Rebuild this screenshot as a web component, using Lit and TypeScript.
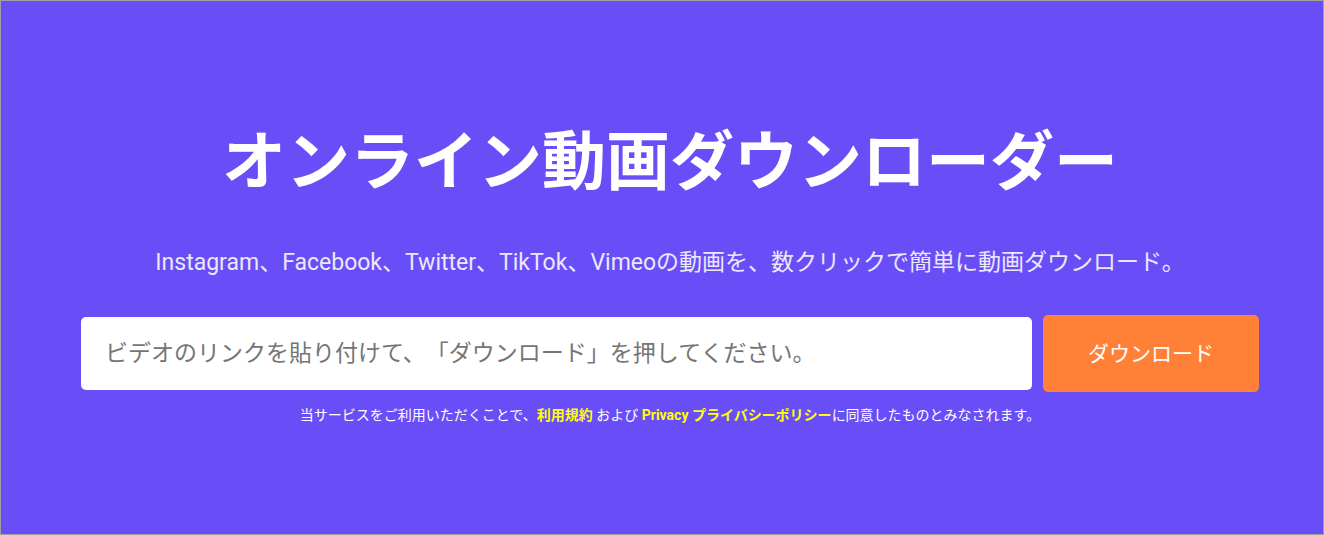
import {html, css, LitElement} from 'lit';
import {customElement, state} from 'lit/decorators.js';

@customElement('app-root')
export class AppRoot extends LitElement {
  /**
   * Link pasted by the visitor.
   */
  @state()
  protected _link: string = '';

  /**
   * CSS - HTML - Template
   */
  static styles = css`
    :host {
      display: block;
      font-family: Roboto, "Noto Sans CJK JP", sans-serif;
      color: #ffffff;
      text-spacing-trim: space-all;
    }

    * {
      box-sizing: border-box;
    }

    .hero {
      display: flex;
      flex-direction: column;
      align-items: center;
      min-height: 100vh;
      padding: 114px 64px 96px 80px;
      border: 1px solid #a0a0a0;
      background: #694ef8;
      text-align: center;
    }

    h1 {
      margin: 0;
      font-size: 64px;
      line-height: 96px;
      font-weight: 700;
    }

    .lead {
      margin: 32px 0;
      font-size: 23px;
      line-height: 40px;
      color: #ebe8fa;
    }

    form {
      display: flex;
      align-items: center;
      gap: 11px;
      width: 100%;
    }

    .link {
      flex: 1;
      min-width: 0;
      height: 73px;
      padding: 0 24px;
      border: none;
      border-radius: 5px;
      background: #ffffff;
      color: #333333;
      font: inherit;
      font-size: 23px;
      text-spacing-trim: inherit;
    }

    .link::placeholder {
      color: #757575;
      opacity: 1;
    }

    .download {
      height: 77px;
      padding: 0 45px 4px;
      border: none;
      border-radius: 5px;
      background: #ff8036;
      color: #ffffff;
      font: inherit;
      font-size: 21px;
      cursor: pointer;
    }

    .terms {
      margin: 12px 0 0;
      font-size: 14px;
      line-height: 22px;
    }

    .terms a {
      color: #ffff00;
      font-weight: 700;
      text-decoration: none;
    }
  `;

  render() {
    return html`
      <main class="hero">
        <h1>オンライン動画ダウンローダー</h1>
        <p class="lead">Instagram、Facebook、Twitter、TikTok、Vimeoの動画を、数クリックで簡単に動画ダウンロード。</p>
        <form @submit=${this._submit}>
          <input class="link" type="text" aria-label="ビデオのリンク" .value=${this._link} @input=${this._linkInput}
            placeholder="ビデオのリンクを貼り付けて、「ダウンロード」を押してください。" />
          <button class="download" type="submit">ダウンロード</button>
        </form>
        <p class="terms">当サービスをご利用いただくことで、<a href="#terms">利用規約</a> および <a href="#privacy">Privacy プライバシーポリシー</a>に同意したものとみなされます。</p>
      </main>
    `;
  }

  /**
   * Methods
   */
  protected _linkInput(event) {
    this._link = event.target.value;
  }

  protected _submit(event) {
    event.preventDefault();
  }
}
